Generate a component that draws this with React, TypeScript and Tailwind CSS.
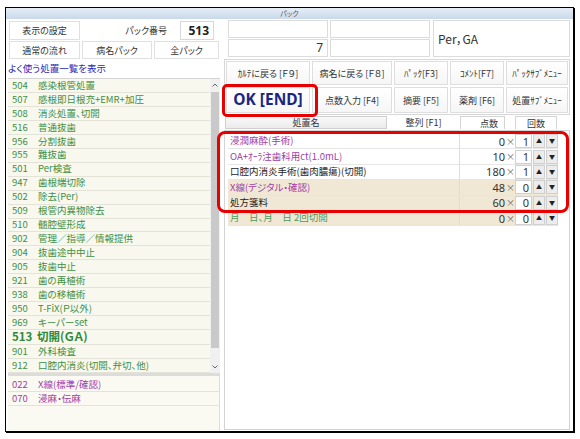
import React from 'react';

interface Item {
  code: string;
  name: string;
  big?: boolean;
}

const mainList: Item[] = [
  { code: '504', name: '感染根管処置' },
  { code: '507', name: '感根即日根充+EMR+加圧' },
  { code: '508', name: '消炎処置、切開' },
  { code: '516', name: '普通抜歯' },
  { code: '956', name: '分割抜歯' },
  { code: '955', name: '難抜歯' },
  { code: '501', name: 'Per検査' },
  { code: '947', name: '歯根端切除' },
  { code: '502', name: '除去(Per)' },
  { code: '509', name: '根管内異物除去' },
  { code: '510', name: '髄腔壁形成' },
  { code: '902', name: '管理／指導／情報提供' },
  { code: '904', name: '抜歯途中中止' },
  { code: '905', name: '抜歯中止' },
  { code: '921', name: '歯の再植術' },
  { code: '938', name: '歯の移植術' },
  { code: '950', name: 'T-FiX(Ｐ以外)' },
  { code: '969', name: 'キーパーset' },
  { code: '513', name: '切開(ＧＡ)', big: true },
  { code: '901', name: '外科検査' },
  { code: '912', name: '口腔内消炎(切開、弁切、他)' },
];

const subList: Item[] = [
  { code: '022', name: 'X線(標準/確認)' },
  { code: '070', name: '浸麻・伝麻' },
];

interface Treat {
  name: string;
  color: string;
  points: string;
  count: string;
  beige?: boolean;
}

const treatments: Treat[] = [
  { name: '浸潤麻酔(手術)', color: 'text-[#a23ca6]', points: '0', count: '1' },
  { name: 'OA+ｵｰﾗ注歯科用ct(1.0mL)', color: 'text-[#a23ca6]', points: '10', count: '1' },
  { name: '口腔内消炎手術(歯肉膿瘍)(切開)', color: 'text-[#222]', points: '180', count: '1' },
  { name: 'X線(デジタル・確認)', color: 'text-[#a23ca6]', points: '48', count: '0', beige: true },
  { name: '処方箋料', color: 'text-[#222]', points: '60', count: '0', beige: true },
  { name: '月　日、月　日 2回切開', color: 'text-[#4c9a5c]', points: '0', count: '0', beige: true },
];

function Box({ className = '', children }: { className?: string; children?: React.ReactNode }) {
  return (
    <div className={`border border-[#e0e0e0] bg-white flex items-center justify-center text-[9px] text-[#333] ${className}`}>
      {children}
    </div>
  );
}

function Btn({ className = '', children }: { className?: string; children?: React.ReactNode }) {
  return (
    <div className={`border border-[#dedede] bg-gradient-to-b from-white to-[#f6f6f6] flex items-center justify-center text-[9px] text-[#333] whitespace-nowrap ${className}`}>
      {children}
    </div>
  );
}

function ListRow({ item, purple }: { item: Item; purple?: boolean }) {
  const color = purple ? 'text-[#a23ca6]' : 'text-[#3f8f44]';
  if (item.big) {
    return (
      <div className="h-[15px] flex items-center border-b border-[#e3e3d8] pl-[4px] text-[#2f8a35] font-bold text-[11.5px]">
        <span className="w-[25px]">{item.code}</span>
        <span>{item.name}</span>
      </div>
    );
  }
  return (
    <div className={`h-[14px] flex items-center border-b border-[#e3e3d8] pl-[4px] text-[9.5px] ${color}`}>
      <span className="w-[26px]">{item.code}</span>
      <span className="whitespace-nowrap">{item.name}</span>
    </div>
  );
}

function Chevron({ up }: { up?: boolean }) {
  return (
    <svg width="6" height="4" viewBox="0 0 6 4">
      <path d={up ? 'M0.5 3.5 L3 1 L5.5 3.5' : 'M0.5 0.5 L3 3 L5.5 0.5'} fill="none" stroke="#666" strokeWidth="1" />
    </svg>
  );
}

export default function App() {
  return (
    <div className="relative w-[580px] h-[439px] bg-white pl-[5px] pt-[7px] font-['Noto_Sans_CJK_JP',sans-serif] [font-feature-settings:'palt'] leading-none">
      <div className="w-[569px] h-[425px] border border-black shadow-[1px_1px_0_#000] flex flex-col bg-white">
        {/* title */}
        <div className="h-[11px] bg-gradient-to-b from-[#e6eef7] to-[#c9d9ea] flex items-center justify-center text-[7px] text-[#555]">
          パック
        </div>

        <div className="flex flex-1">
          {/* left side */}
          <div className="w-[214px] flex flex-col">
            <div className="pl-[3px] pt-[2px] flex flex-col gap-[1px]">
              <div className="flex h-[19px]">
                <Box className="w-[71px]">表示の設定</Box>
                <div className="w-[100px] flex items-center justify-end pr-[13px] text-[9px] text-[#333]">パック番号</div>
                <div className="w-[34px] border border-[#d8d8d8] bg-white flex items-center justify-end pr-[4px] font-['Noto_Sans',sans-serif] font-bold text-[12px] text-[#222]">
                  513
                </div>
              </div>
              <div className="flex h-[18px] gap-[2px]">
                <Box className="w-[71px]">通常の流れ</Box>
                <Box className="w-[70px]">病名パック</Box>
                <Box className="w-[65px]">全パック</Box>
              </div>
            </div>
            <div className="h-[19px] flex items-center pl-[2px] text-[9.5px] text-[#2a2ab8]">よく使う処置一覧を表示</div>

            <div className="ml-[2px] w-[212px] h-[295px] border-t border-[#d4d4d4] flex overflow-hidden">
              <div className="flex-1 bg-[#f8f8ee] flex flex-col overflow-hidden">
                {mainList.map(it => (
                  <ListRow key={it.code} item={it} />
                ))}
              </div>
              <div className="w-[10px] bg-[#f0f0f0] flex flex-col items-center">
                <div className="h-[12px] flex items-center"><Chevron up /></div>
                <div className="flex-1 w-full px-[1px]">
                  <div className="mt-[1px] h-[256px] bg-[#c9c9c9]" />
                </div>
                <div className="h-[12px] flex items-center"><Chevron /></div>
              </div>
            </div>

            <div className="h-[3px] bg-[#dcdcdc] ml-[2px]" />

            <div className="ml-[2px] w-[212px] flex-1 bg-[#fafaf3] border-r border-[#dcdcdc] flex flex-col">
              <div className="h-[2px]" />
              {subList.map(it => (
                <ListRow key={it.code} item={it} purple />
              ))}
            </div>
          </div>

          {/* right side */}
          <div className="flex-1 flex flex-col">
            <div className="flex pl-[8px] pt-[1px] h-[38px]">
              <div className="flex flex-col gap-[1px]">
                <div className="flex gap-[2px]">
                  <div className="w-[100px] h-[18px] border border-[#dcdcdc] bg-white" />
                  <div className="w-[100px] h-[18px] border border-[#dcdcdc] bg-white" />
                </div>
                <div className="flex gap-[2px]">
                  <div className="w-[100px] h-[18px] border border-[#dcdcdc] bg-white flex items-center justify-end pr-[4px] text-[12px] text-[#333] font-['Noto_Sans',sans-serif]">7</div>
                  <div className="w-[100px] h-[18px] border border-[#dcdcdc] bg-white" />
                </div>
              </div>
              <div className="ml-[3px] w-[137px] h-[37px] border border-[#dcdcdc] bg-white flex items-center pl-[4px] text-[12px] text-[#333]">
                Per，GA
              </div>
            </div>

            <div className="mt-[2px] ml-[4px] w-[346px] h-[56px] border border-[#d8d8d8] bg-white flex flex-col px-[1px] pt-[1px] gap-[2px]">
              <div className="flex h-[24px] gap-[2px]">
                <Btn className="w-[84px]">ｶﾙﾃに戻る [Ｆ９]</Btn>
                <Btn className="w-[80px]">病名に戻る [Ｆ８]</Btn>
                <Btn className="w-[54px]">ﾊﾟｯｸ[F3]</Btn>
                <Btn className="w-[54px]">ｺﾒﾝﾄ[F7]</Btn>
                <Btn className="w-[62px]">ﾊﾟｯｸｻﾌﾞﾒﾆｭｰ</Btn>
              </div>
              <div className="flex h-[26px] gap-[2px]">
                <Btn className="w-[84px]">
                  <span className="font-['Noto_Sans',sans-serif] font-bold text-[15.5px] text-[#1b2683]">OK [END]</span>
                </Btn>
                <Btn className="w-[80px]">点数入力 [F4]</Btn>
                <Btn className="w-[54px]">摘要 [F5]</Btn>
                <Btn className="w-[54px]">薬剤 [F6]</Btn>
                <Btn className="w-[62px]">処置ｻﾌﾞﾒﾆｭｰ</Btn>
              </div>
            </div>

            <div className="mt-[1px] ml-[5px] h-[13px] flex text-[9px] text-[#333]">
              <div className="w-[162px] border border-[#cfcfcf] bg-gradient-to-b from-[#f9f9f9] to-[#ebebeb] flex items-center justify-center">処置名</div>
              <div className="w-[73px] flex items-center justify-center">整列 [F1]</div>
              <div className="w-[45px] border border-[#d4d4d4] border-b-0 bg-white flex items-center justify-end pr-[6px]">点数</div>
              <div className="w-[42px] ml-[10px] border border-[#d4d4d4] border-b-0 bg-white flex items-center justify-center">回数</div>
            </div>

            <div className="mt-[1px] mb-[1px] ml-[4px] w-[346px] flex-1 border border-[#d4d4d4] bg-white pl-[3px] pt-[3px]">
              {treatments.map((t, i) => (
                <div
                  key={i}
                  className={`w-[330px] h-[15.4px] flex items-center border-b border-[#e6e6e6] ${t.beige ? 'bg-[#f0e8d5]' : 'bg-white'}`}
                >
                  <div className={`w-[232px] h-full flex items-center pl-[2px] border-r border-[#dddddd] text-[9.5px] whitespace-nowrap ${t.color}`}>
                    {t.name}
                  </div>
                  <div className="w-[46px] text-right pr-[1px] text-[11px] text-[#333] font-['Noto_Sans',sans-serif]">{t.points}</div>
                  <div className="w-[9px] text-center text-[9px] text-[#666]">×</div>
                  <div className="w-[17px] h-[14px] bg-white border border-[#d0d0d0] flex items-center justify-end pr-[2px] text-[11px] text-[#333] font-['Noto_Sans',sans-serif]">
                    {t.count}
                  </div>
                  <div className="ml-[1px] w-[12px] h-[14px] bg-[#ececec] border border-[#d0d0d0] flex items-center justify-center text-[6px] text-[#222]">▲</div>
                  <div className="ml-[1px] w-[12px] h-[14px] bg-[#ececec] border border-[#d0d0d0] flex items-center justify-center text-[6px] text-[#222]">▼</div>
                </div>
              ))}
            </div>
          </div>
        </div>
      </div>

      {/* highlight annotations */}
      <div className="absolute left-[222px] top-[84px] w-[96px] h-[33px] border-[3px] border-[#e60000] rounded-[5px] pointer-events-none" />
      <div className="absolute left-[217px] top-[131px] w-[352px] h-[82px] border-[3px] border-[#e60000] rounded-[8px] pointer-events-none" />
    </div>
  );
}
